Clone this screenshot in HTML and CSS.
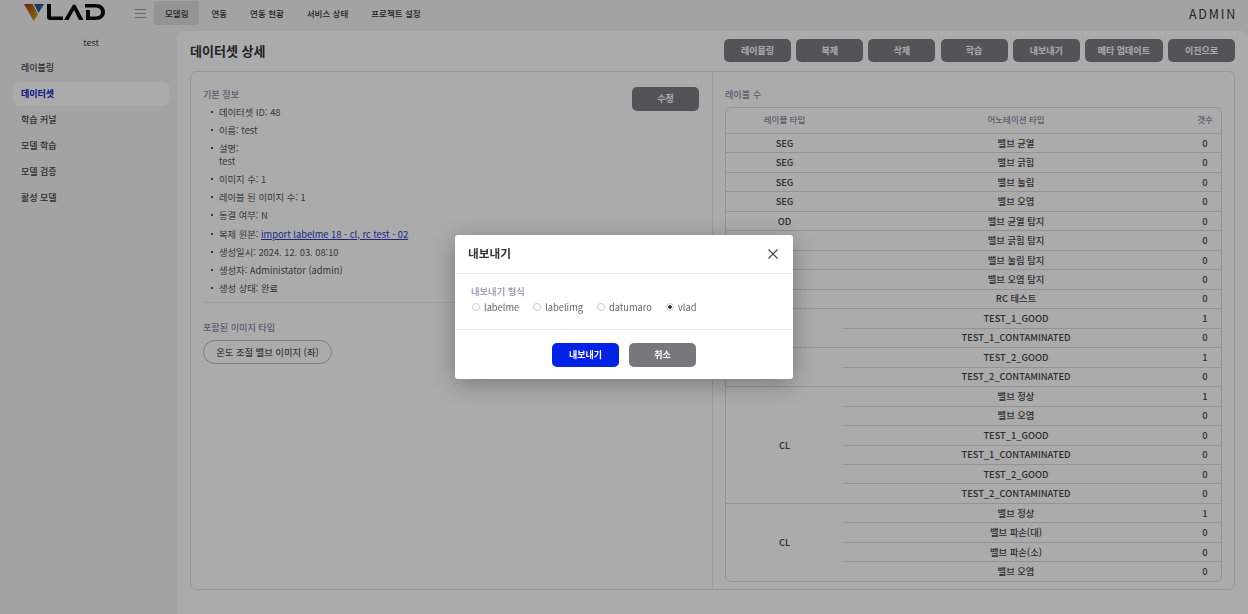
FILE: index.html
```html
<!DOCTYPE html>
<html lang="ko">
<head>
    <meta charset="utf-8">
    <title>VLAD</title>
    <link rel="stylesheet" href="styles.css">
</head>
<body>
<div class="app">
    <header class="topbar">
        <a class="logo">
            <svg width="84" height="24" viewBox="0 0 84 24">
                <defs>
                    <linearGradient id="logoGrad" x1="0" y1="0" x2="0.5" y2="1">
                        <stop offset="0" stop-color="#a02f22"/>
                        <stop offset="0.55" stop-color="#b5701c"/>
                        <stop offset="1" stop-color="#b89a1c"/>
                    </linearGradient>
                </defs>
                <path d="M1 3H9.500L15 13.500L10.500 20Z" fill="url(#logoGrad)"/>
                <path d="M11 3H21L15.500 12Z" fill="#1f5a8f"/>
                <path d="M24 3H28V15.500H40V19H27C25 19 24 18 24 16Z" fill="#0d0d0d"/>
                <path d="M41 19L49.500 4.500C50.300 3 52 3 52.800 4.500L60.500 19H56L51 9L45.500 19Z" fill="#0d0d0d"/>
                <path d="M62 3H72.500C78.500 3 82 6.500 82 11S78.500 19 72.500 19H63V9H67V15.500H72C76 15.500 78 14 78 11S76 6.500 72 6.500H62Z" fill="#0d0d0d"/>
            </svg>
        </a>
        <span class="burger"><i></i><i></i><i></i></span>
        <nav class="topnav">
            <a class="active">모델링</a>
            <a>연동</a>
            <a>연동 현황</a>
            <a>서비스 상태</a>
            <a>프로젝트 설정</a>
        </nav>
        <span class="user">ADMIN</span>
    </header>
    <div class="layout">
        <aside class="sidebar">
            <div class="project">test</div>
            <a>레이블링</a>
            <a class="active">데이터셋</a>
            <a>학습 커널</a>
            <a>모델 학습</a>
            <a>모델 검증</a>
            <a>활성 모델</a>
        </aside>
        <main class="content">
            <div class="page-head">
                <h1>데이터셋 상세</h1>
                <div class="actions">
                    <a class="btn">레이블링</a>
                    <a class="btn">복제</a>
                    <a class="btn">삭제</a>
                    <a class="btn">학습</a>
                    <a class="btn">내보내기</a>
                    <a class="btn btn-wide">메타 업데이트</a>
                    <a class="btn btn-back">이전으로</a>
                </div>
            </div>
            <div class="panel">
                <section class="info">
                    <div class="info-head">
                        <h2>기본 정보</h2>
                        <a class="btn btn-edit">수정</a>
                    </div>
                    <ul class="info-list">
                        <li>데이터셋 ID: 48</li>
                        <li>이름: test</li>
                        <li>설명:<br>test</li>
                        <li>이미지 수: 1</li>
                        <li>레이블 된 이미지 수: 1</li>
                        <li>동결 여부: N</li>
                        <li>복제 원본: <a class="link">import labelme 18 - cl, rc test - 02</a></li>
                        <li>생성일시: 2024. 12. 03. 08:10</li>
                        <li>생성자: Administator (admin)</li>
                        <li>생성 상태: 완료</li>
                    </ul>
                    <h2 class="types-title">포함된 이미지 타입</h2>
                    <span class="pill">온도 조절 밸브 이미지 (좌)</span>
                </section>
                <section class="labels">
                    <h2>레이블 수</h2>
                    <div class="table-wrap">
                        <table>
                            <thead>
                                <tr><th class="col-type">레이블 타입</th><th>어노테이션 타입</th><th class="num">갯수</th></tr>
                            </thead>
                            <tbody>
                                <tr><td>SEG</td><td>밸브 균열</td><td class="num">0</td></tr>
                                <tr><td>SEG</td><td>밸브 긁힘</td><td class="num">0</td></tr>
                                <tr><td>SEG</td><td>밸브 눌림</td><td class="num">0</td></tr>
                                <tr><td>SEG</td><td>밸브 오염</td><td class="num">0</td></tr>
                                <tr><td>OD</td><td>밸브 균열 탐지</td><td class="num">0</td></tr>
                                <tr><td>OD</td><td>밸브 긁힘 탐지</td><td class="num">0</td></tr>
                                <tr><td>OD</td><td>밸브 눌림 탐지</td><td class="num">0</td></tr>
                                <tr><td>OD</td><td>밸브 오염 탐지</td><td class="num">0</td></tr>
                                <tr><td>RC</td><td>RC 테스트</td><td class="num">0</td></tr>
                                <tr><td rowspan="2">CL</td><td>TEST_1_GOOD</td><td class="num">1</td></tr>
                                <tr><td>TEST_1_CONTAMINATED</td><td class="num">0</td></tr>
                                <tr><td rowspan="2">CL</td><td>TEST_2_GOOD</td><td class="num">1</td></tr>
                                <tr><td>TEST_2_CONTAMINATED</td><td class="num">0</td></tr>
                                <tr><td rowspan="6">CL</td><td>밸브 정상</td><td class="num">1</td></tr>
                                <tr><td>밸브 오염</td><td class="num">0</td></tr>
                                <tr><td>TEST_1_GOOD</td><td class="num">0</td></tr>
                                <tr><td>TEST_1_CONTAMINATED</td><td class="num">0</td></tr>
                                <tr><td>TEST_2_GOOD</td><td class="num">0</td></tr>
                                <tr><td>TEST_2_CONTAMINATED</td><td class="num">0</td></tr>
                                <tr><td rowspan="4">CL</td><td>밸브 정상</td><td class="num">1</td></tr>
                                <tr><td>밸브 파손(대)</td><td class="num">0</td></tr>
                                <tr><td>밸브 파손(소)</td><td class="num">0</td></tr>
                                <tr><td>밸브 오염</td><td class="num">0</td></tr>
                            </tbody>
                        </table>
                    </div>
                </section>
            </div>
        </main>
    </div>
</div>
<div class="backdrop">
    <div class="modal">
        <div class="modal-head">
            <h3>내보내기</h3>
            <svg class="close" width="10" height="10" viewBox="0 0 10 10"><path d="M0.500 0.500L9.500 9.500M9.500 0.500L0.500 9.500" stroke="#444" stroke-width="1.200" fill="none"/></svg>
        </div>
        <div class="modal-body">
            <div class="field-title">내보내기 형식</div>
            <div class="radios">
                <label><i class="radio"></i>labelme</label>
                <label><i class="radio"></i>labelimg</label>
                <label><i class="radio"></i>datumaro</label>
                <label><i class="radio checked"></i>vlad</label>
            </div>
        </div>
        <div class="modal-foot">
            <a class="mbtn mbtn-primary">내보내기</a>
            <a class="mbtn mbtn-cancel">취소</a>
        </div>
    </div>
</div>
</body>
</html>
```

FILE: styles.css
```css
* {
    margin: 0;
    padding: 0;
    box-sizing: border-box;
}
html,body {
    height: 100%;
    overflow: hidden;
}
body {
    font-family: "Noto Sans CJK KR", "Noto Sans", sans-serif;
    font-size: 9.300px;
    color: #212529;
    background-color: #fff;
}
.app {
    height: 614px;
    display: flex;
    flex-direction: column;
    background-color: #f4f4f4;
}
.topbar {
    height: 31px;
    flex: none;
    display: flex;
    align-items: flex-start;
    padding: 1px 11px 0 23px;
}
.logo {
    width: 84px;
    height: 24px;
    margin-right: 28px;
}
.burger {
    width: 11px;
    height: 24px;
    margin-right: 8px;
    display: flex;
    flex-direction: column;
    justify-content: center;
    gap: 3px;
}
.burger i {
    display: block;
    height: 1px;
    background-color: #999;
}
.topnav {
    display: flex;
    flex: 1;
    font-weight: 500;
    font-size: 8.500px;
    color: #333;
}
.topnav a {
    height: 24px;
    line-height: 24px;
    padding: 0 11px;
    margin-right: 1px;
    border-radius: 3px;
}
.topnav a.active {
    background-color: #ddd;
}
.user {
    font-size: 12.500px;
    line-height: 26px;
    letter-spacing: 1.800px;
    color: #333;
}
.layout {
    flex: 1;
    display: flex;
    min-height: 0;
}
.sidebar {
    width: 177px;
    padding: 5px 8px 0 13px;
    display: flex;
    flex-direction: column;
    font-size: 9px;
    font-weight: 500;
    color: #444;
}
.sidebar .project {
    text-align: center;
    font-weight: 400;
    height: 16px;
    line-height: 14px;
    margin-bottom: 4px;
}
.sidebar a {
    height: 24px;
    line-height: 24px;
    padding-left: 8px;
    margin-bottom: 2px;
    border-radius: 6px;
    flex: none;
}
.sidebar a.active {
    background-color: #fff;
    color: #0a22c0;
    font-weight: 700;
}
.content {
    flex: 1;
    background-color: #fff;
    border-top-left-radius: 6px;
    border-top-right-radius: 6px;
    padding: 8px 13px 24px 13px;
    display: flex;
    flex-direction: column;
    min-width: 0;
}
.page-head {
    height: 23px;
    display: flex;
    align-items: center;
    justify-content: space-between;
    margin-bottom: 9px;
}
.page-head h1 {
    font-size: 13px;
    font-weight: 700;
    color: #333;
}
.actions {
    display: flex;
    gap: 5.170px;
}
.btn {
    display: block;
    width: 67px;
    height: 23.500px;
    line-height: 23px;
    text-align: center;
    background-color: #7d7e83;
    color: #fff;
    font-weight: 700;
    font-size: 9px;
    border-radius: 5px;
}
.btn-wide {
    width: 78px;
}
.panel {
    flex: 1;
    display: flex;
    border: 1px solid #e2e2e4;
    border-radius: 6px;
    min-height: 0;
}
.info {
    width: 522px;
    padding: 15px 13px 0 12px;
    border-right: 1px solid #e8e8ea;
}
h2 {
    font-size: 9.100px;
    font-weight: 500;
    color: #8a8ca6;
}
.info-head {
    display: flex;
    justify-content: space-between;
    align-items: flex-start;
    height: 19px;
}
.info-head h2 {
    line-height: 14px;
}
.info-list {
    list-style: none;
    padding-left: 16px;
    padding-bottom: 2px;
    border-bottom: 1px solid #eeeeee;
    color: #555;
}
.info-list li {
    position: relative;
    line-height: 13px;
    margin-bottom: 5.100px;
}
.info-list li::before {
    content: "";
    position: absolute;
    left: -8px;
    top: 5px;
    width: 2px;
    height: 2px;
    background-color: #555;
}
.link {
    color: #2a3cc8;
    text-decoration: underline;
}
.types-title {
    margin-top: 17px;
    line-height: 14px;
}
.pill {
    display: block;
    margin-top: 6px;
    width: 129px;
    height: 24px;
    line-height: 22px;
    text-align: center;
    border: 1px solid #bbb;
    border-radius: 12px;
    font-weight: 500;
    color: #555;
}
.labels {
    flex: 1;
    padding: 15px 12px 0 12px;
    min-width: 0;
}
.labels h2 {
    line-height: 14px;
}
.table-wrap {
    margin-top: 6px;
    border: 1px solid #dcdcdc;
    border-radius: 6px;
    overflow: hidden;
}
table {
    width: 100%;
    border-collapse: collapse;
    table-layout: fixed;
}
th {
    height: 25.500px;
    padding-bottom: 3px;
    font-size: 8.500px;
    font-weight: 500;
    color: #8a8a9a;
    text-align: center;
}
td {
    height: 19.480px;
    line-height: 13px;
    font-weight: 500;
    color: #444;
    text-align: center;
    border-top: 1px solid #dcdcdc;
}
.col-type {
    width: 117px;
}
th.num {
    width: 32px;
}
.backdrop {
    position: fixed;
    left: 0;
    top: 0;
    right: 0;
    bottom: 0;
    background-color: rgba(0,0,0,.33);
    display: flex;
    align-items: center;
    justify-content: center;
}
.modal {
    width: 338px;
    height: 144px;
    background-color: #fff;
    border-radius: 3px;
    box-shadow: 0 5px 25px rgba(0,0,0,.3);
}
.modal-head {
    height: 39px;
    display: flex;
    align-items: center;
    justify-content: space-between;
    padding: 0 15px 0 13px;
    border-bottom: 1px solid #e6e6e8;
}
.modal-head h3 {
    font-size: 11.700px;
    font-weight: 700;
    line-height: 16px;
    margin-bottom: 2px;
    color: #333;
}
.modal-body {
    height: 56px;
    padding: 10px 16px 0;
    border-bottom: 1px solid #e6e6e8;
}
.field-title {
    font-weight: 700;
    line-height: 14px;
    color: #a2a4bc;
}
.radios {
    display: flex;
    gap: 14px;
    margin-top: 2px;
    padding-left: 1px;
    color: #666;
}
.radios label {
    display: flex;
    align-items: center;
    gap: 4px;
    line-height: 14px;
}
.radio {
    display: block;
    width: 8px;
    height: 8px;
    border: 1px solid #ccc;
    border-radius: 50%;
    background-color: #fff;
}
.radio.checked {
    background: radial-gradient(circle, #333 0 1.500px, #fff 2px);
}
.modal-foot {
    display: flex;
    justify-content: center;
    gap: 10px;
    padding-top: 13px;
}
.mbtn {
    display: block;
    width: 67px;
    height: 24px;
    line-height: 23px;
    text-align: center;
    color: #fff;
    font-size: 9px;
    font-weight: 700;
    border-radius: 5px;
}
.mbtn-primary {
    background-color: #0222e6;
}
.mbtn-cancel {
    background-color: #77787d;
}
```
